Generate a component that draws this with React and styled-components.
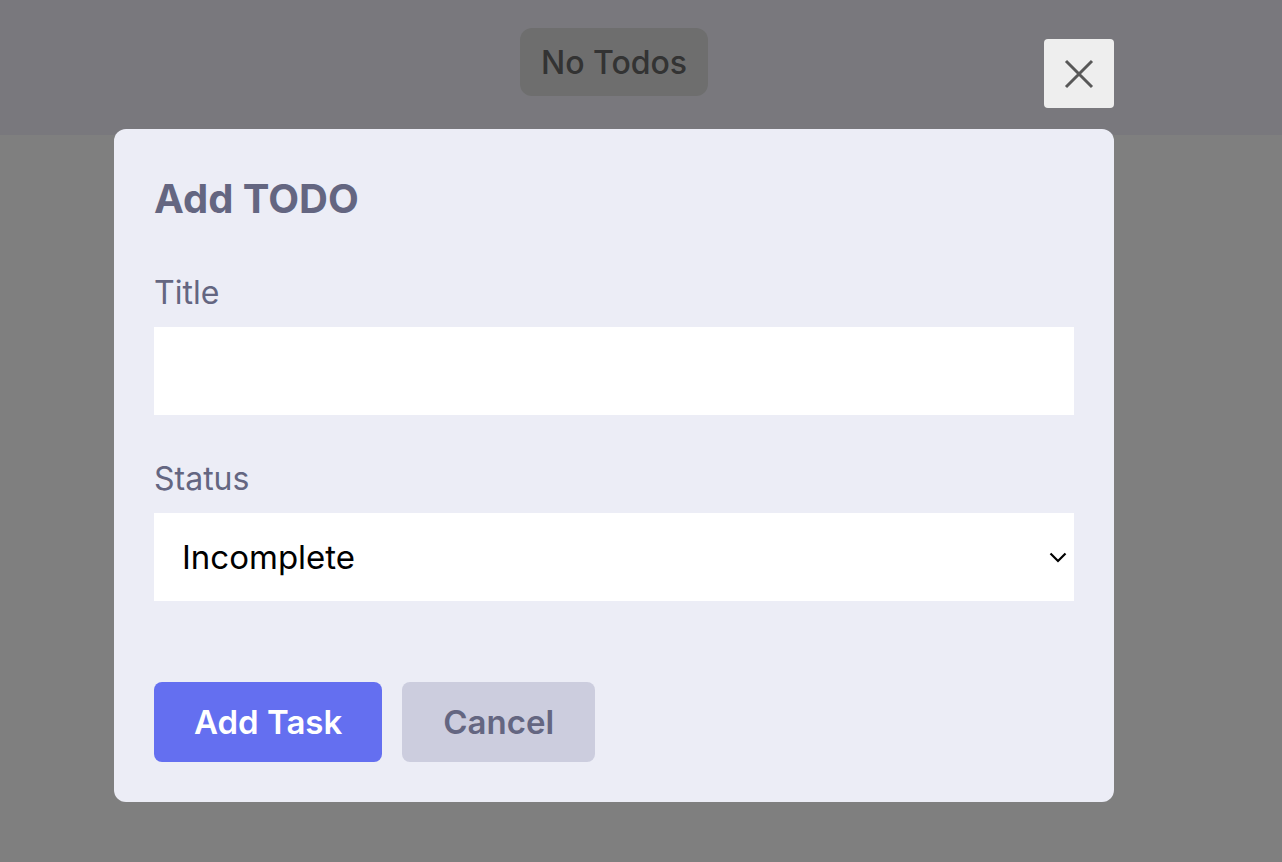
import styled, { createGlobalStyle } from "styled-components"

const GlobalStyle = createGlobalStyle`
    * { box-sizing: border-box; }
    body {
        margin: 0;
        font-family: Inter, "Open Sans", sans-serif;
        background: #ffffff;
    }
`
const Page = styled.div`
    min-height: 862px;
    background: #ffffff;
`
const Header = styled.header`
    height: 135px;
    background: #f2f1fa;
    padding: 28px 0 0 114px;
`
const Container = styled.div`
    width: 1000px;
    display: flex;
    justify-content: center;
`
const Empty = styled.p`
    margin: 0;
    height: 68px;
    padding: 0 21px;
    display: flex;
    align-items: center;
    border-radius: 12px;
    background: #dcdcdc;
    color: #666666;
    font-size: 32px;
    font-weight: 500;
`
const Overlay = styled.div`
    position: fixed;
    inset: 0;
    background: rgba(0, 0, 0, 0.5);
    padding: 129px 0 0 114px;
`
const Modal = styled.div`
    position: relative;
    width: 1000px;
    padding: 40px;
    border-radius: 12px;
    background: #ecedf6;
`
const CloseButton = styled.button`
    position: absolute;
    top: -90px;
    right: 0;
    width: 70px;
    height: 69px;
    border: none;
    border-radius: 4px;
    background: #eeeeee;
    display: flex;
    align-items: center;
    justify-content: center;
    cursor: pointer;
    padding: 0;
`
const Heading = styled.h1`
    margin: 0 0 48px;
    font-size: 40px;
    line-height: 1.5;
    font-weight: 700;
    color: #646681;
`
const Field = styled.label`
    display: block;
    margin-bottom: ${p => p.$gap}px;
`
const LabelText = styled.span`
    display: block;
    font-size: 32px;
    line-height: 1;
    color: #646681;
    margin-bottom: 18px;
`
const Input = styled.input`
    display: block;
    width: 100%;
    height: 88px;
    border: none;
    background: #ffffff;
    padding: 0 28px;
    font-family: inherit;
    font-size: 32px;
    outline: none;
`
const SelectWrap = styled.div`
    position: relative;
`
const Select = styled.select`
    display: block;
    width: 100%;
    height: 88px;
    border: none;
    border-radius: 0;
    appearance: none;
    background: #ffffff;
    padding: 0 28px;
    font-family: inherit;
    font-size: 33px;
    color: #000000;
    outline: none;
`
const Chevron = styled.svg`
    position: absolute;
    right: 7px;
    top: 39px;
    pointer-events: none;
`
const Actions = styled.div`
    display: flex;
    gap: 20px;
`
const Button = styled.button`
    height: 80px;
    padding: 0 ${p => p.$primary ? 40 : 41}px;
    border: none;
    border-radius: 8px;
    font-family: inherit;
    font-size: 33px;
    font-weight: 600;
    cursor: pointer;
    background: ${p => p.$primary ? "#646ff0" : "#cccdde"};
    color: ${p => p.$primary ? "#ffffff" : "#646681"};
`

export default function App() {
  return (
    <>
      <GlobalStyle />
      <Page>
        <Header>
          <Container>
            <Empty>No Todos</Empty>
          </Container>
        </Header>
      </Page>
      <Overlay>
        <Modal>
          <CloseButton aria-label="close">
            <svg width="30" height="30" viewBox="0 0 30 30">
              <path d="M2 2 L28 28 M28 2 L2 28" stroke="#585858" strokeWidth="3" fill="none" />
            </svg>
          </CloseButton>
          <form>
            <Heading>Add TODO</Heading>
            <Field $gap={48}>
              <LabelText>Title</LabelText>
              <Input type="text" />
            </Field>
            <Field $gap={81}>
              <LabelText>Status</LabelText>
              <SelectWrap>
                <Select defaultValue="incomplete">
                  <option value="incomplete">Incomplete</option>
                  <option value="complete">Completed</option>
                </Select>
                <Chevron width="18" height="11" viewBox="0 0 18 11">
                  <path d="M1.5 1.5 L9 9 L16.5 1.5" stroke="#000" strokeWidth="2.2" fill="none" />
                </Chevron>
              </SelectWrap>
            </Field>
            <Actions>
              <Button type="submit" $primary>Add Task</Button>
              <Button type="button">Cancel</Button>
            </Actions>
          </form>
        </Modal>
      </Overlay>
    </>
  )
}
